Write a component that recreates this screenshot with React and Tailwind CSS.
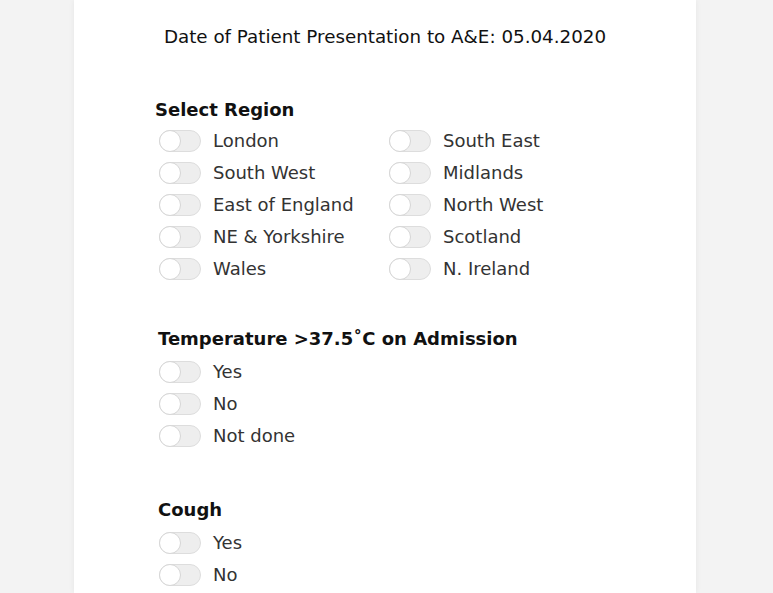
import React from "react";

function Toggle() {
  return (
    <span className="relative inline-block w-[42px] h-[22px] rounded-full bg-[#eeeeee] border border-[#dddddd] shrink-0">
      <span className="absolute left-[-1px] top-[-1px] w-[22px] h-[22px] rounded-full bg-white border border-[#d6d6d6]" />
    </span>
  );
}

function Option({ label }) {
  return (
    <div className="flex items-center h-[32px] pl-[4px]">
      <Toggle />
      <span className="ml-[12px] text-[18px] text-[#333333] leading-[24px]">{label}</span>
    </div>
  );
}

export default function App() {
  const regions1 = ["London", "South West", "East of England", "NE & Yorkshire", "Wales"];
  const regions2 = ["South East", "Midlands", "North West", "Scotland", "N. Ireland"];
  return (
    <div
      className="w-[773px] h-[593px] bg-[#f3f3f3] overflow-hidden flex"
      style={{ fontFamily: '"DejaVu Sans", Verdana, sans-serif' }}
    >
      <div className="ml-[74px] w-[622px] h-full bg-white shadow-[0_0_6px_rgba(0,0,0,0.06)] flex flex-col">
        <div className="pt-[25px] text-center text-[18.3px] text-[#111111] leading-[24px]">
          Date of Patient Presentation to A&amp;E: 05.04.2020
        </div>
        <div className="pl-[81px] mt-[49px]">
          <div className="text-[18px] font-bold text-[#111111] leading-[24px]">Select Region</div>
          <div className="flex mt-[3px]">
            <div className="w-[230px]">
              {regions1.map((r) => (
                <Option key={r} label={r} />
              ))}
            </div>
            <div>
              {regions2.map((r) => (
                <Option key={r} label={r} />
              ))}
            </div>
          </div>
          <div className="pl-[3px] mt-[42px] text-[18px] font-bold text-[#111111] leading-[24px]">
            Temperature &gt;37.5˚C on Admission
          </div>
          <div className="mt-[5px]">
            <Option label="Yes" />
            <Option label="No" />
            <Option label="Not done" />
          </div>
          <div className="pl-[3px] mt-[46px] text-[18px] font-bold text-[#111111] leading-[24px]">Cough</div>
          <div className="mt-[5px]">
            <Option label="Yes" />
            <Option label="No" />
          </div>
        </div>
      </div>
    </div>
  );
}
